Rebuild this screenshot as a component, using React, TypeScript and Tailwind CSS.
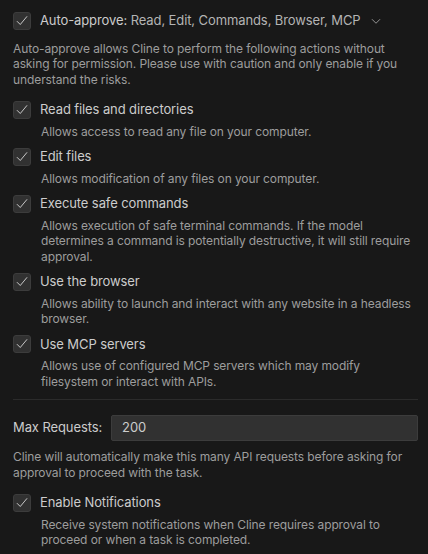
import React from 'react';

const items = [
  { title: 'Read files and directories', desc: 'Allows access to read any file on your computer.' },
  { title: 'Edit files', desc: 'Allows modification of any files on your computer.' },
  {
    title: 'Execute safe commands',
    desc: 'Allows execution of safe terminal commands. If the model determines a command is potentially destructive, it will still require approval.',
  },
  { title: 'Use the browser', desc: 'Allows ability to launch and interact with any website in a headless browser.' },
  { title: 'Use MCP servers', desc: 'Allows use of configured MCP servers which may modify filesystem or interact with APIs.' },
];

function Check() {
  return (
    <div className="w-[18px] h-[18px] shrink-0 rounded-[3px] bg-[#313131] border border-[#3c3c3c] flex items-center justify-center">
      <svg width="14" height="14" viewBox="0 0 16 16" fill="none">
        <path d="M2.5 8.5l3.5 3.5 7.5-9" stroke="#cccccc" strokeWidth="1.1" strokeLinecap="round" strokeLinejoin="round" />
      </svg>
    </div>
  );
}

function Option({ title, desc }: { title: string; desc: string }) {
  return (
    <div className="mb-[8px]">
      <div className="flex items-center gap-[9px]">
        <Check />
        <span className="text-[13px] text-[#cccccc]">{title}</span>
      </div>
      <p className="ml-[28px] mt-[4px] text-[12px] leading-[15.5px] text-[#9d9d9d]">{desc}</p>
    </div>
  );
}

export default function App() {
  return (
    <div
      className="min-h-screen w-[428px] bg-[#181818] pl-[13px] pr-[10px] pt-[11px] tracking-[-0.1px]"
      style={{ fontFamily: 'Inter, "Noto Sans", sans-serif' }}
    >
      <div className="flex items-center gap-[9px]">
        <Check />
        <span className="text-[13px] text-[#cccccc]">
          Auto-approve: <span className="text-[#b4b4b4]">Read, Edit, Commands, Browser, MCP</span>
        </span>
        <svg width="12" height="12" viewBox="0 0 16 16" fill="none" className="ml-[1px]">
          <path d="M3 6l5 5 5-5" stroke="#a0a0a0" strokeWidth="1.2" strokeLinecap="round" strokeLinejoin="round" />
        </svg>
      </div>
      <p className="mt-[10px] mb-[13px] text-[12px] leading-[15.5px] text-[#9d9d9d]">
        Auto-approve allows Cline to perform the following actions without asking for permission. Please use with
        caution and only enable if you understand the risks.
      </p>
      {items.map((it) => (
        <Option key={it.title} title={it.title} desc={it.desc} />
      ))}
      <div className="h-px bg-[#2b2b2b] mt-[10px] mb-[15px]" />
      <div className="flex items-center gap-[9px]">
        <span className="text-[13px] text-[#cccccc]">Max Requests:</span>
        <div className="flex-1 h-[26px] bg-[#313131] border border-[#3c3c3c] rounded-[2px] px-[10px] flex items-center text-[13px] text-[#cccccc]">
          200
        </div>
      </div>
      <p className="mt-[8px] mb-[13px] text-[12px] leading-[15.5px] text-[#9d9d9d]">
        Cline will automatically make this many API requests before asking for approval to proceed with the task.
      </p>
      <Option
        title="Enable Notifications"
        desc="Receive system notifications when Cline requires approval to proceed or when a task is completed."
      />
    </div>
  );
}
